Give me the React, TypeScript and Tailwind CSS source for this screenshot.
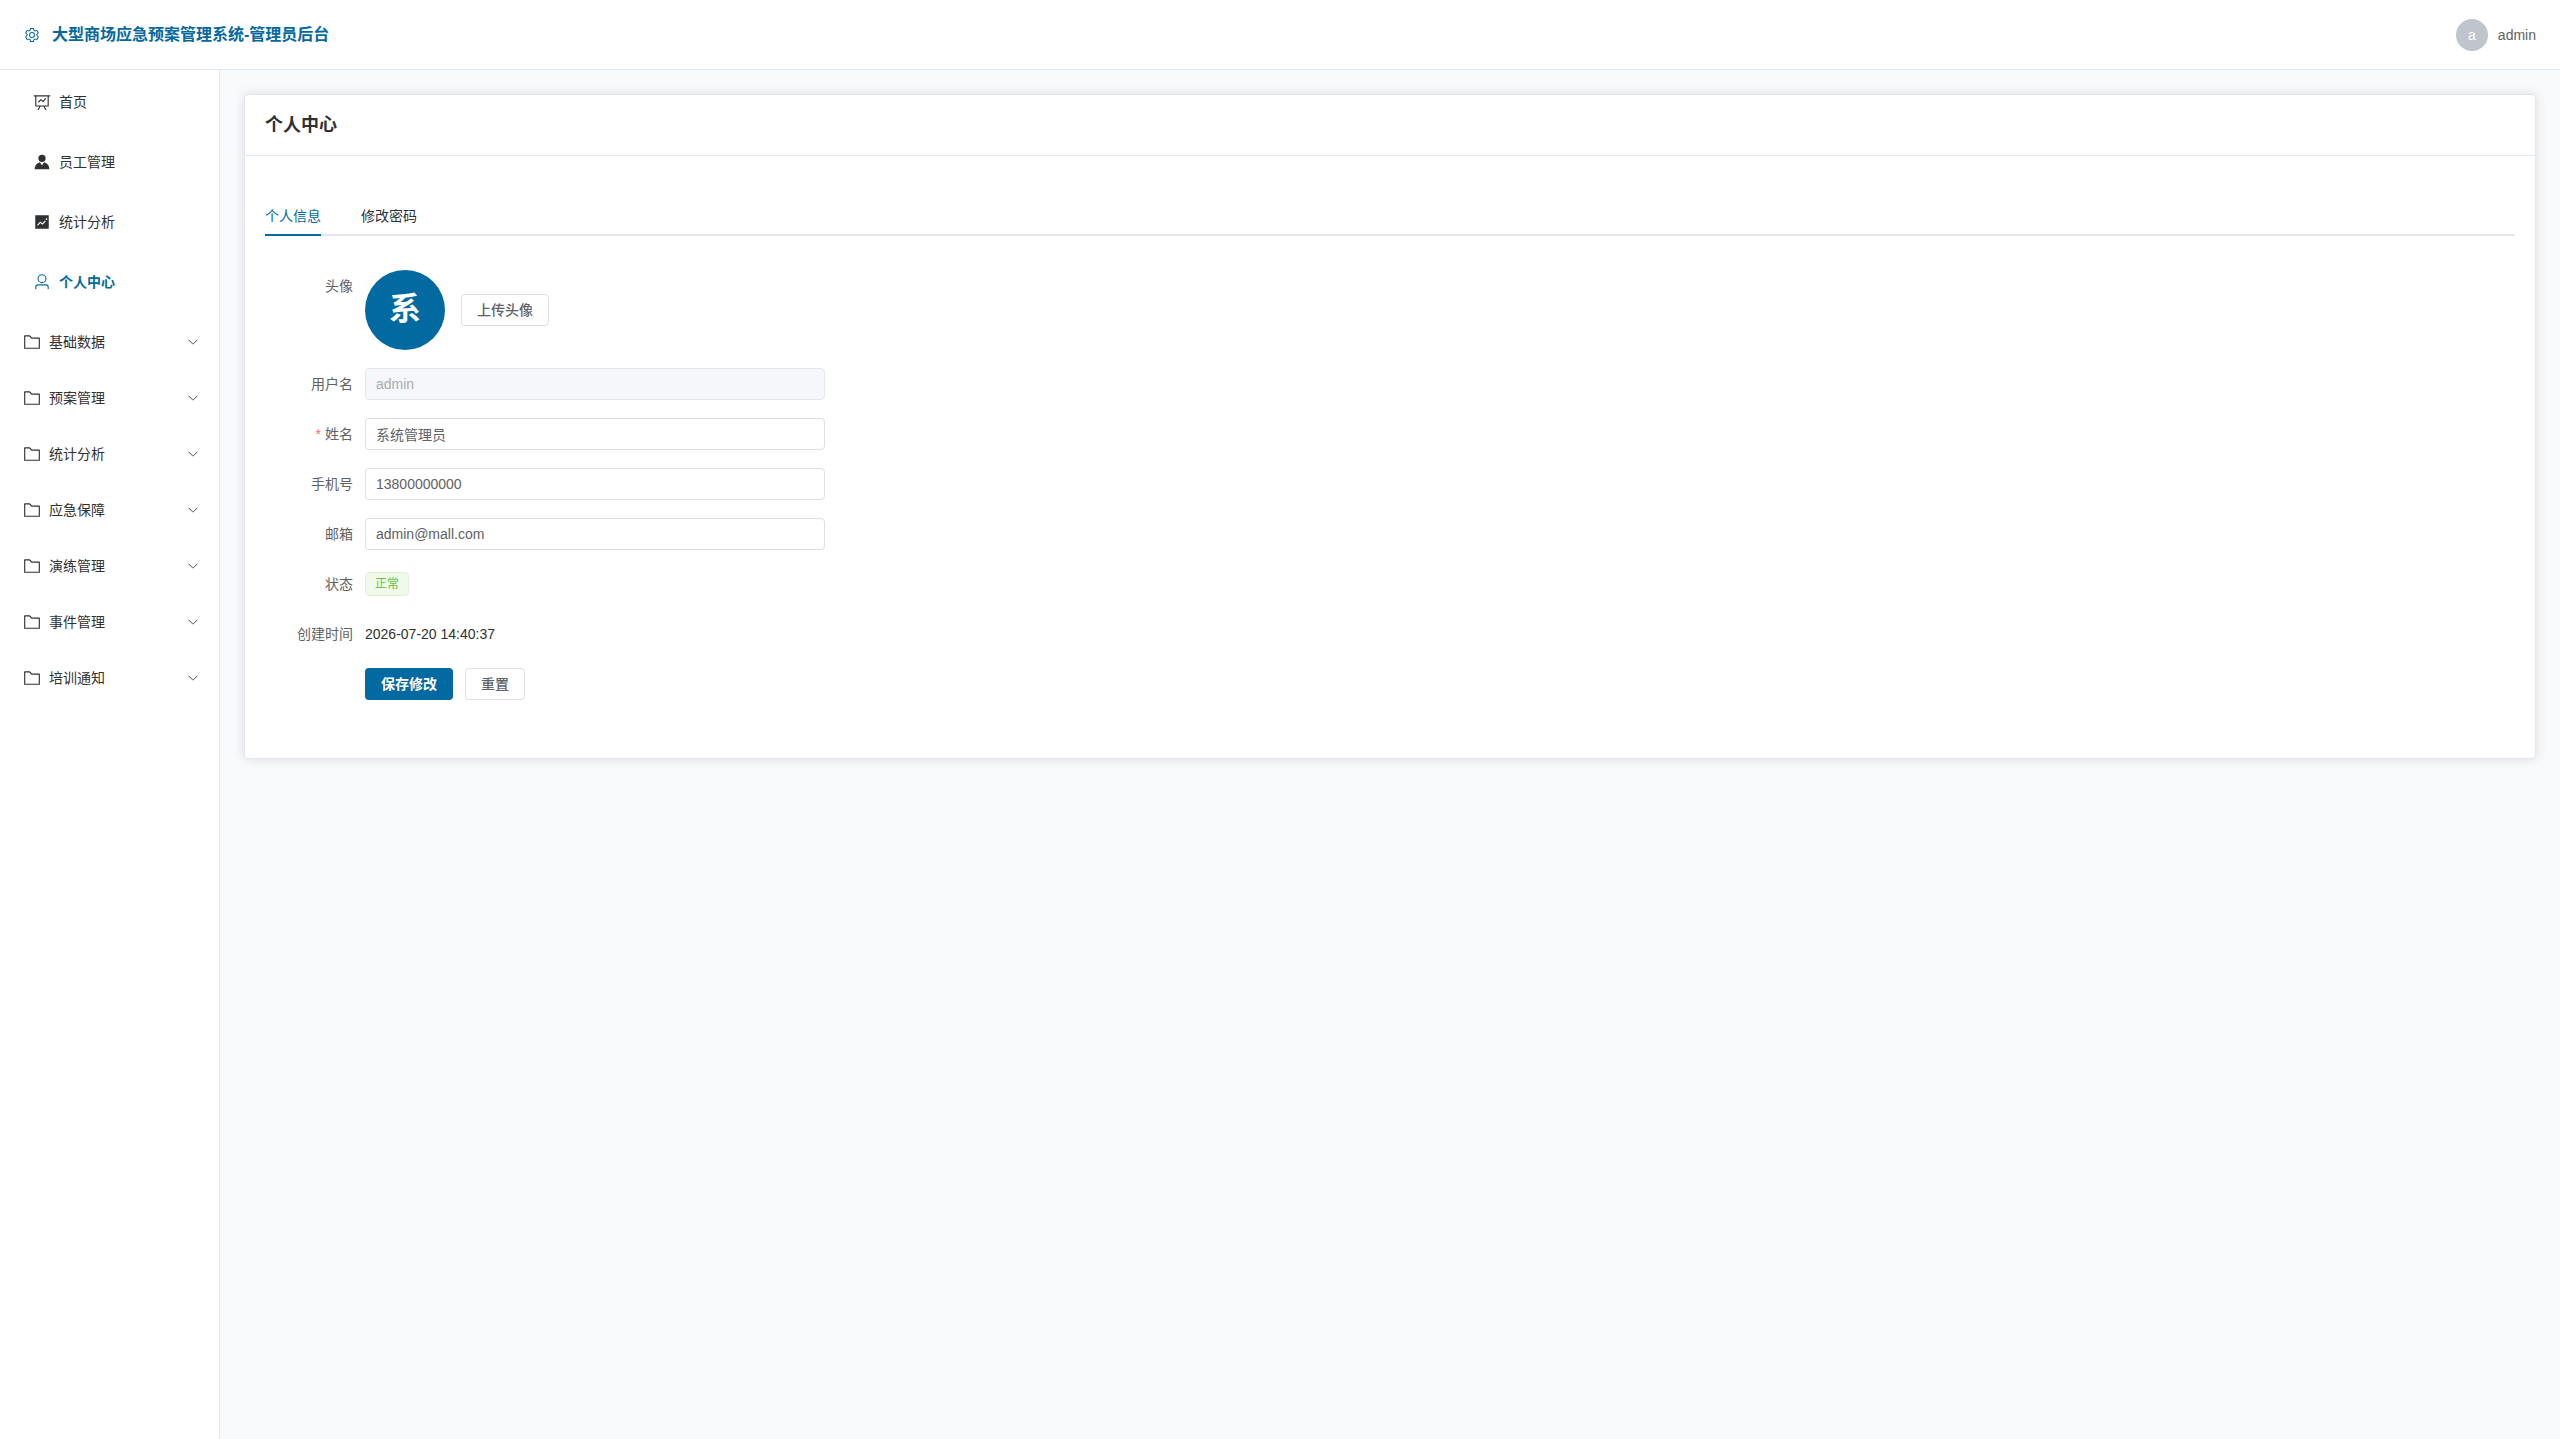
import React, { useState } from 'react';
import clsx from 'clsx';

const icons = {
  setting:
    'M600.704 64a32 32 0 0 1 30.464 22.208l35.2 109.376c14.784 7.232 28.928 15.36 42.432 24.512l112.384-24.192a32 32 0 0 1 34.432 15.36L944.32 364.8a32 32 0 0 1-4.032 37.504l-77.12 85.12a357.12 357.12 0 0 1 0 49.024l77.12 85.248a32 32 0 0 1 4.032 37.504l-88.704 153.6a32 32 0 0 1-34.432 15.296L708.8 803.904c-13.44 9.088-27.648 17.28-42.368 24.512l-35.264 109.376A32 32 0 0 1 600.704 960H423.296a32 32 0 0 1-30.464-22.208L357.696 828.48a351.616 351.616 0 0 1-42.56-24.64l-112.32 24.256a32 32 0 0 1-34.432-15.36L79.68 659.2a32 32 0 0 1 4.032-37.504l77.12-85.248a357.12 357.12 0 0 1 0-48.896l-77.12-85.248A32 32 0 0 1 79.68 364.8l88.704-153.6a32 32 0 0 1 34.432-15.296l112.32 24.256c13.568-9.152 27.776-17.408 42.56-24.64l35.2-109.312A32 32 0 0 1 423.232 64H600.64zm-23.424 64H446.72l-36.352 113.088-24.512 11.968a294.113 294.113 0 0 0-34.816 20.096l-22.656 15.36-116.224-25.088-65.28 113.152 79.68 88.192-1.92 27.136a293.12 293.12 0 0 0 0 40.192l1.92 27.136-79.808 88.192 65.344 113.152 116.224-25.024 22.656 15.296a294.113 294.113 0 0 0 34.816 20.096l24.512 11.968L446.72 896h130.688l36.48-113.152 24.448-11.904a288.282 288.282 0 0 0 34.752-20.096l22.592-15.296 116.288 25.024 65.28-113.152-79.744-88.192 1.92-27.136a293.12 293.12 0 0 0 0-40.256l-1.92-27.136 79.808-88.128-65.344-113.152-116.288 24.96-22.592-15.232a287.616 287.616 0 0 0-34.752-20.096l-24.448-11.904L577.344 128zM512 320a192 192 0 1 1 0 384 192 192 0 0 1 0-384m0 64a128 128 0 1 0 0 256 128 128 0 0 0 0-256',
  dataLine:
    'M359.168 768H160a32 32 0 0 1-32-32V192H64a32 32 0 0 1 0-64h896a32 32 0 1 1 0 64h-64v544a32 32 0 0 1-32 32H665.216l110.848 192h-73.856L591.36 768H433.024L322.176 960H248.32zM832 192H192v512h640zM342.656 534.656a32 32 0 1 1-45.312-45.312L444.992 341.76l125.44 94.08L679.04 300.032a32 32 0 1 1 49.92 39.936L581.632 524.224 451.008 426.24z',
  avatar:
    'M628.736 528.896A416 416 0 0 1 928 928H96a415.872 415.872 0 0 1 299.264-399.104L512 704zM720 304a208 208 0 1 1-416 0 208 208 0 0 1 416 0',
  trend:
    'M128 896V128h768v768zm291.712-327.296 128 102.4 180.16-201.792-47.744-42.624-139.84 156.608-128-102.4-180.16 201.792 47.744 42.624zM816 352a48 48 0 1 0-96 0 48 48 0 0 0 96 0',
  user:
    'M512 512a192 192 0 1 0 0-384 192 192 0 0 0 0 384m0 64a256 256 0 1 1 0-512 256 256 0 0 1 0 512m320 320v-96a96 96 0 0 0-96-96H288a96 96 0 0 0-96 96v96a32 32 0 1 1-64 0v-96a160 160 0 0 1 160-160h448a160 160 0 0 1 160 160v96a32 32 0 1 1-64 0',
  folder:
    'M128 192v640h768V320H485.76L357.504 192zm-32-64h287.872l128.384 128H928a32 32 0 0 1 32 32v576a32 32 0 0 1-32 32H96a32 32 0 0 1-32-32V160a32 32 0 0 1 32-32',
  arrowDown:
    'M831.872 340.864 512 652.672 192.128 340.864a30.592 30.592 0 0 0-42.752 0 29.12 29.12 0 0 0 0 41.6L489.664 714.24a32 32 0 0 0 44.672 0l340.288-331.712a29.12 29.12 0 0 0 0-41.728 30.592 30.592 0 0 0-42.752 0z',
};

interface IconProps {
  name: keyof typeof icons;
  className?: string;
}

const Icon: React.FC<IconProps> = ({ name, className }) => (
  <svg viewBox="0 0 1024 1024" fill="currentColor" className={clsx('shrink-0', className)} aria-hidden="true">
    <path d={icons[name]} />
  </svg>
);

const menuItems: { icon: keyof typeof icons; label: string }[] = [
  { icon: 'dataLine', label: '首页' },
  { icon: 'avatar', label: '员工管理' },
  { icon: 'trend', label: '统计分析' },
  { icon: 'user', label: '个人中心' },
];

const subMenus = ['基础数据', '预案管理', '统计分析', '应急保障', '演练管理', '事件管理', '培训通知'];

const tabs = ['个人信息', '修改密码'];

const Header = () => (
  <header className="h-[70px] shrink-0 px-6 flex items-center justify-between bg-white border-b border-[#e2e8f0]">
    <div className="flex items-center gap-3 text-[#0369a1]">
      <Icon name="setting" className="size-4" />
      <h1 className="text-base font-bold">大型商场应急预案管理系统-管理员后台</h1>
    </div>
    <button type="button" className="flex items-center gap-[10px] text-[#606266]">
      <span className="size-8 rounded-full bg-[#c0c4cc] text-white flex items-center justify-center">a</span>
      <span>admin</span>
    </button>
  </header>
);

const Sidebar = () => (
  <aside className="w-[220px] shrink-0 bg-white border-r border-[#e2e8f0] pt-1">
    <nav>
      <ul className="flex flex-col gap-1 pb-1">
        {menuItems.map((item) => {
          const active = item.label === '个人中心';
          return (
            <li key={item.label}>
              <a
                href="#"
                className={clsx('h-14 px-[30px] flex items-center gap-[5px]', active && 'text-[#0369a1] font-bold')}
              >
                <span className="w-6 flex justify-center">
                  <Icon name={item.icon} className="size-[18px]" />
                </span>
                {item.label}
              </a>
            </li>
          );
        })}
      </ul>
      {subMenus.map((label) => (
        <button key={label} type="button" className="w-full h-14 px-5 flex items-center gap-[5px]">
          <span className="w-6 flex justify-center">
            <Icon name="folder" className="size-[18px]" />
          </span>
          {label}
          <Icon name="arrowDown" className="size-3 ml-auto" />
        </button>
      ))}
    </nav>
  </aside>
);

interface FormRowProps {
  label?: string;
  htmlFor?: string;
  required?: boolean;
  children: React.ReactNode;
}

const FormRow: React.FC<FormRowProps> = ({ label, htmlFor, required, children }) => (
  <div className="flex items-start">
    <label htmlFor={htmlFor} className="w-[100px] h-8 pr-3 shrink-0 flex items-center justify-end gap-1 text-[#606266]">
      {required && <span className="text-[#f56c6c]">*</span>}
      {label}
    </label>
    <div className="flex-1 min-h-8 flex items-center">{children}</div>
  </div>
);

const inputClass =
  'w-full h-8 px-[10px] rounded border border-[#dcdfe6] bg-white text-[#606266] outline-none disabled:bg-[#f5f7fa] disabled:border-[#e4e7ed] disabled:text-[#a8abb2]';

const buttonClass = 'h-8 px-[15px] rounded border border-[#dcdfe6] bg-white text-[#606266] font-medium';

const ProfileForm = () => {
  const [name, setName] = useState('系统管理员');
  const [phone, setPhone] = useState('13800000000');
  const [email, setEmail] = useState('admin@mall.com');

  return (
    <form className="max-w-[560px] flex flex-col gap-[18px] pb-[18px]">
      <FormRow label="头像" htmlFor="upload">
        <div className="flex items-center gap-4">
          <span className="size-20 rounded-full bg-[#0369a1] text-white text-[32px] font-bold flex items-center justify-center">
            系
          </span>
          <button id="upload" type="button" className={buttonClass}>上传头像</button>
        </div>
      </FormRow>
      <FormRow label="用户名" htmlFor="username">
        <input id="username" type="text" className={inputClass} value="admin" disabled />
      </FormRow>
      <FormRow label="姓名" htmlFor="name" required>
        <input id="name" type="text" className={inputClass} value={name} onChange={(e) => setName(e.target.value)} />
      </FormRow>
      <FormRow label="手机号" htmlFor="phone">
        <input id="phone" type="tel" className={inputClass} value={phone} onChange={(e) => setPhone(e.target.value)} />
      </FormRow>
      <FormRow label="邮箱" htmlFor="email">
        <input id="email" type="email" className={inputClass} value={email} onChange={(e) => setEmail(e.target.value)} />
      </FormRow>
      <FormRow label="状态">
        <span className="h-6 px-[9px] rounded border border-[#e1f3d8] bg-[#f0f9eb] text-[#67c23a] text-xs flex items-center">
          正常
        </span>
      </FormRow>
      <FormRow label="创建时间">
        <span>2026-07-20 14:40:37</span>
      </FormRow>
      <FormRow>
        <div className="flex gap-3">
          <button type="button" className="h-8 px-4 rounded bg-[#0369a1] text-white font-bold">保存修改</button>
          <button type="button" className={buttonClass}>重置</button>
        </div>
      </FormRow>
    </form>
  );
};

export default function App() {
  const [tab, setTab] = useState(tabs[0]);

  return (
    <div className="min-h-screen flex flex-col bg-[#f8fafc] text-sm text-[#303133] font-['Liberation_Sans','Noto_Sans_CJK_SC',sans-serif]">
      <Header />
      <div className="flex-1 flex">
        <Sidebar />
        <main className="flex-1 p-6">
          <section className="bg-white rounded border border-[#e4e7ed] shadow-[0_0_12px_rgba(0,0,0,0.12)]">
            <div className="px-5 py-[18px] border-b border-[#e4e7ed]">
              <h2 className="text-lg leading-6 font-bold">个人中心</h2>
            </div>
            <div className="px-5 pt-10 pb-10">
              <div role="tablist" className="flex gap-10 shadow-[inset_0_-2px_0_#e4e7ed]">
                {tabs.map((t) => (
                  <button
                    key={t}
                    type="button"
                    role="tab"
                    aria-selected={t === tab}
                    onClick={() => setTab(t)}
                    className={clsx('h-10', t === tab && 'text-[#0369a1] shadow-[inset_0_-2px_0_#0369a1]')}
                  >
                    {t}
                  </button>
                ))}
              </div>
              <div className="pt-[34px]">
                <ProfileForm />
              </div>
            </div>
          </section>
        </main>
      </div>
    </div>
  );
}
